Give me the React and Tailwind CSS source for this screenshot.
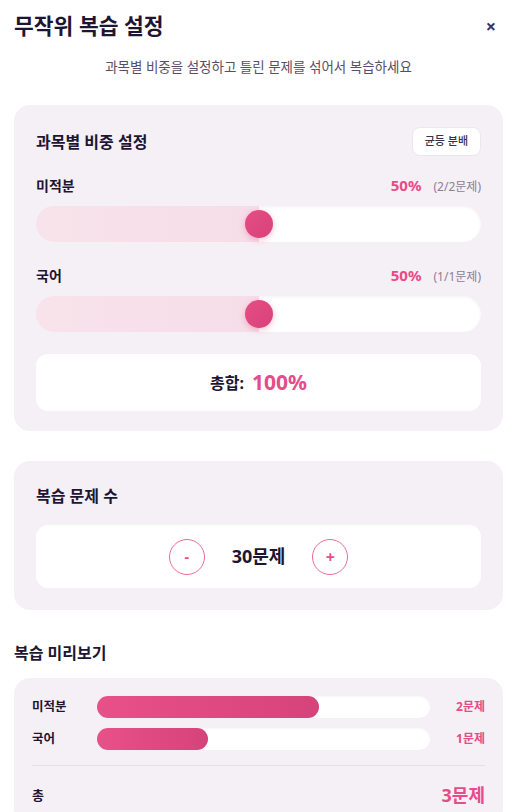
import { useState } from 'react';

const subjects = [
  { name: '미적분', percent: 50, picked: 2, total: 2 },
  { name: '국어', percent: 50, picked: 1, total: 1 },
];

function WeightSlider({ subject }) {
  return (
    <div>
      <div className="flex items-center justify-between h-5">
        <span className="text-[14px] font-bold text-[#1e1533]">{subject.name}</span>
        <div className="flex items-baseline gap-3">
          <span className="text-[15px] font-bold text-[#e64c87]">{subject.percent}%</span>
          <span className="text-[12px] text-[#8a8094]">
            ({subject.picked}/{subject.total}문제)
          </span>
        </div>
      </div>
      <div className="relative mt-[11px] h-9 rounded-full bg-white shadow-[inset_0_1px_3px_rgba(120,80,110,0.08)]">
        <div
          className="absolute inset-y-0 left-0 rounded-l-full bg-gradient-to-r from-[#f8e3eb] to-[#f6dde7]"
          style={{ width: `${subject.percent}%` }}
        />
        <div
          className="absolute top-1/2 h-7 w-7 -translate-x-1/2 -translate-y-1/2 rounded-full bg-gradient-to-br from-[#e64d85] to-[#d8417a] shadow-[0_2px_6px_rgba(230,76,135,0.35)]"
          style={{ left: `${subject.percent}%` }}
        />
      </div>
    </div>
  );
}

function PreviewRow({ name, count, max }) {
  return (
    <div className="flex items-center h-[22px]">
      <span className="w-[65px] text-[12.5px] font-bold text-[#1e1533]">{name}</span>
      <div className="relative h-[22px] w-[333px] rounded-full bg-white shadow-[inset_0_1px_2px_rgba(120,80,110,0.05)]">
        <div
          className="absolute inset-y-0 left-0 rounded-full bg-gradient-to-r from-[#e8508a] to-[#d6437a]"
          style={{ width: `${(count / max) * 100}%` }}
        />
      </div>
      <span className="ml-auto text-[12px] font-bold text-[#e64c87]">{count}문제</span>
    </div>
  );
}

export default function App() {
  const [count, setCount] = useState(30);

  return (
    <div
      className="min-h-screen bg-white px-[14px] pb-6"
      style={{ fontFamily: '"Noto Sans", "Noto Sans CJK KR", sans-serif' }}
    >
      <div className="flex items-center justify-between pt-3">
        <h1 className="text-[21.5px] font-bold leading-7 text-[#1e1533]">무작위 복습 설정</h1>
        <button className="mr-[7px] text-[18px] font-bold leading-none text-[#3b3060]">×</button>
      </div>
      <p className="mt-[17px] text-center text-[13.5px] leading-5 text-[#5a4e66]">
        과목별 비중을 설정하고 틀린 문제를 섞어서 복습하세요
      </p>

      <section className="mt-[28px] rounded-2xl bg-[#f5f0f6] px-[22px] pt-[22px] pb-5">
        <div className="flex items-center justify-between">
          <h2 className="text-[16px] font-bold leading-[22px] text-[#1e1533]">과목별 비중 설정</h2>
          <button className="h-[29px] rounded-lg border border-[#ece6ee] bg-white px-3 text-[11px] font-medium text-[#3b3050]">
            균등 분배
          </button>
        </div>
        <div className="mt-[19px] flex flex-col gap-[23px]">
          {subjects.map((s) => (
            <WeightSlider key={s.name} subject={s} />
          ))}
        </div>
        <div className="mt-[22px] flex h-[57px] items-center justify-center gap-2 rounded-xl bg-white">
          <span className="text-[16px] font-bold text-[#1e1533]">총합:</span>
          <span className="text-[21px] font-bold text-[#e64c87]">100%</span>
        </div>
      </section>

      <section className="mt-[30px] rounded-2xl bg-[#f5f0f6] px-[22px] pt-6 pb-[22px]">
        <h2 className="text-[16px] font-bold leading-[22px] text-[#1e1533]">복습 문제 수</h2>
        <div className="mt-[18px] flex h-[63px] items-center justify-center gap-[27px] rounded-xl bg-white">
          <button
            onClick={() => setCount(count - 1)}
            className="flex h-9 w-9 items-center justify-center rounded-full border border-[#ec6a9a] text-[14px] font-bold text-[#e64c87]"
          >
            -
          </button>
          <span className="text-[18px] font-bold text-[#1e1533]">{count}문제</span>
          <button
            onClick={() => setCount(count + 1)}
            className="flex h-9 w-9 items-center justify-center rounded-full border border-[#ec6a9a] text-[16px] font-bold text-[#e64c87]"
          >
            +
          </button>
        </div>
      </section>

      <h2 className="mt-8 text-[16px] font-bold leading-[22px] text-[#1e1533]">복습 미리보기</h2>
      <section className="mt-[14px] rounded-2xl bg-[#f5f0f6] px-[18px] pt-[18px] pb-4">
        <div className="flex flex-col gap-[10px]">
          <PreviewRow name="미적분" count={2} max={3} />
          <PreviewRow name="국어" count={1} max={3} />
        </div>
        <div className="mt-[15px] border-t border-[#e6dfe8]" />
        <div className="flex items-center justify-between pt-4">
          <span className="text-[13px] font-bold text-[#1e1533]">총</span>
          <span className="text-[18px] font-bold text-[#e64c87]">3문제</span>
        </div>
      </section>
    </div>
  );
}
